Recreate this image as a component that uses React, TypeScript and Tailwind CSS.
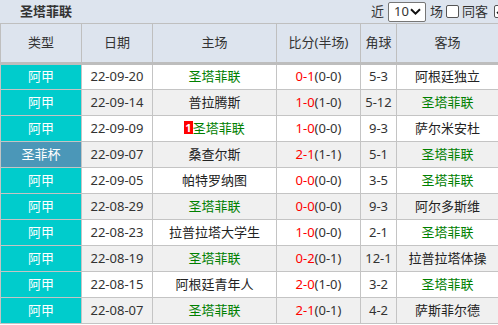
import React from "react";

type Row = {
  type: string;
  cup?: boolean;
  date: string;
  home: string;
  homeGreen?: boolean;
  badge?: string;
  score: string;
  half: string;
  corner: string;
  away: string;
  awayGreen?: boolean;
};

const rows: Row[] = [
  { type: "阿甲", date: "22-09-20", home: "圣塔菲联", homeGreen: true, score: "0-1", half: "(0-0)", corner: "5-3", away: "阿根廷独立" },
  { type: "阿甲", date: "22-09-14", home: "普拉腾斯", score: "1-0", half: "(1-0)", corner: "5-12", away: "圣塔菲联", awayGreen: true },
  { type: "阿甲", date: "22-09-09", home: "圣塔菲联", homeGreen: true, badge: "1", score: "1-0", half: "(0-0)", corner: "9-3", away: "萨尔米安杜" },
  { type: "圣菲杯", cup: true, date: "22-09-07", home: "桑查尔斯", score: "2-1", half: "(1-1)", corner: "5-1", away: "圣塔菲联", awayGreen: true },
  { type: "阿甲", date: "22-09-05", home: "帕特罗纳图", score: "0-0", half: "(0-0)", corner: "3-5", away: "圣塔菲联", awayGreen: true },
  { type: "阿甲", date: "22-08-29", home: "圣塔菲联", homeGreen: true, score: "0-0", half: "(0-0)", corner: "9-3", away: "阿尔多斯维" },
  { type: "阿甲", date: "22-08-23", home: "拉普拉塔大学生", score: "1-0", half: "(0-0)", corner: "2-1", away: "圣塔菲联", awayGreen: true },
  { type: "阿甲", date: "22-08-19", home: "圣塔菲联", homeGreen: true, score: "0-2", half: "(0-1)", corner: "12-1", away: "拉普拉塔体操" },
  { type: "阿甲", date: "22-08-15", home: "阿根廷青年人", score: "2-0", half: "(1-0)", corner: "3-2", away: "圣塔菲联", awayGreen: true },
  { type: "阿甲", date: "22-08-07", home: "圣塔菲联", homeGreen: true, score: "2-1", half: "(0-1)", corner: "4-2", away: "萨斯菲尔德" },
];

const font = { fontFamily: '"Noto Sans", "Noto Sans CJK SC", sans-serif' };

export default function App() {
  return (
    <div className="w-[498px] h-[325px] overflow-hidden bg-white text-[12px] text-[#333]" style={font}>
      <div className="h-[23px] bg-[#dde4ee] flex items-center overflow-hidden">
        <div className="w-[371px] shrink-0 pl-[20px] font-bold text-[13px] text-[#333] leading-none">圣塔菲联</div>
        <div className="flex items-center h-full shrink-0 text-[13px] text-[#333] whitespace-nowrap">
          <span className="leading-none shrink-0">近</span>
          <div className="ml-[4px] w-[38px] h-[20px] shrink-0 border border-[#767676] bg-white flex items-center justify-between pl-[5px] pr-[4px] rounded-[2px]">
            <span className="leading-none text-[13px]">10</span>
            <svg width="11" height="7" viewBox="0 0 11 7">
              <path d="M1 1.2 L5.5 5.6 L10 1.2" fill="none" stroke="#111" strokeWidth="2" />
            </svg>
          </div>
          <span className="ml-[4px] leading-none shrink-0">场</span>
          <span className="ml-[3px] w-[13px] h-[13px] border border-[#555] bg-white rounded-[2px] shrink-0"></span>
          <span className="ml-[3px] leading-none shrink-0">同客</span>
          <span className="ml-[6px] w-[13px] h-[13px] border border-[#555] bg-white rounded-[2px] flex items-center justify-center shrink-0">
            <svg width="9" height="8" viewBox="0 0 9 8">
              <path d="M1 4 L3.5 6.5 L8 1" fill="none" stroke="#111" strokeWidth="1.6" />
            </svg>
          </span>
        </div>
      </div>
      <table className="border-collapse table-fixed w-[498px]">
        <colgroup>
          <col className="w-[81px]" />
          <col className="w-[71px]" />
          <col className="w-[124px]" />
          <col className="w-[84px]" />
          <col className="w-[36px]" />
          <col className="w-[102px]" />
        </colgroup>
        <thead>
          <tr className="h-[40px] bg-[#dde4ee]">
            {["类型", "日期", "主场", "比分(半场)", "角球", "客场"].map((h) => (
              <th key={h} className="font-normal text-[13px] text-[#333] border border-[#bfbfbf] border-b-[3px] border-b-[#bdbdbd] p-0 text-center">
                {h}
              </th>
            ))}
          </tr>
        </thead>
        <tbody>
          {rows.map((r, i) => {
            const bg = i % 2 === 0 ? "bg-white" : "bg-[#f0f0f0]";
            return (
              <tr key={i} className={`h-[26px] ${bg}`}>
                <td className={`border border-[#c4c4c4] p-0 text-center text-white text-[13px] ${r.cup ? "bg-[#4b97b8]" : "bg-[#00cccc]"}`}>
                  {r.type}
                </td>
                <td className="border border-[#c4c4c4] p-0 text-center text-[13px]">{r.date}</td>
                <td className="border border-[#c4c4c4] p-0 text-center text-[13px] whitespace-nowrap overflow-hidden">
                  {r.badge && (
                    <span className="inline-block bg-[#ff0000] text-white font-bold text-[11px] leading-[13px] px-[1px] align-[1px]">{r.badge}</span>
                  )}
                  <span className={r.homeGreen ? "text-[#008000]" : "text-[#222]"}>{r.home}</span>
                </td>
                <td className="border border-[#c4c4c4] p-0 text-center text-[13px]">
                  <span className="text-[#ff0000]">{r.score}</span>
                  <span className="text-[#333]">{r.half}</span>
                </td>
                <td className="border border-[#c4c4c4] p-0 text-center text-[13px]">{r.corner}</td>
                <td className="border border-[#c4c4c4] p-0 text-center text-[13px] whitespace-nowrap overflow-hidden">
                  <span className={r.awayGreen ? "text-[#008000]" : "text-[#222]"}>{r.away}</span>
                </td>
              </tr>
            );
          })}
        </tbody>
      </table>
    </div>
  );
}
